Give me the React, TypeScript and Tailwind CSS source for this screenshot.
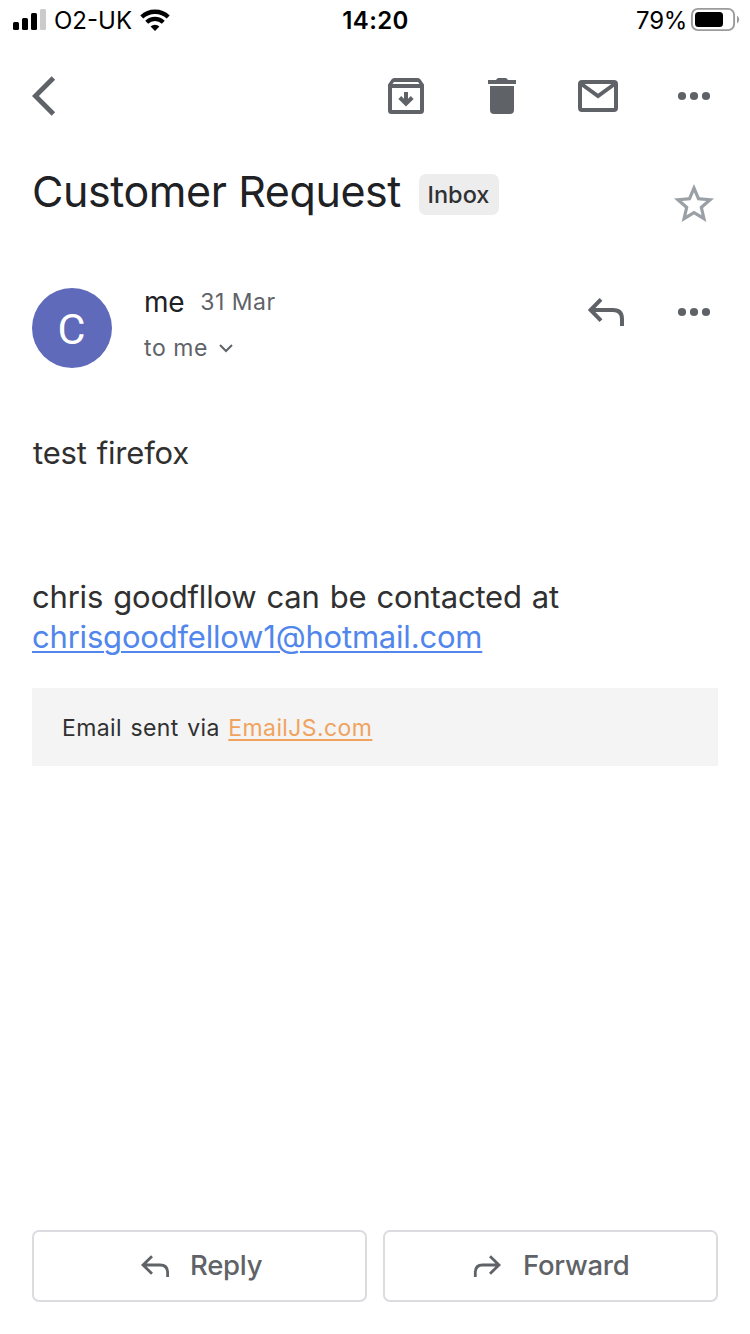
import type { ReactNode } from "react";

function Icon({ w = 48, h = 48, className = "", children }: { w?: number; h?: number; className?: string; children: ReactNode }) {
  return (
    <svg width={w} height={h} viewBox={`0 0 ${w} ${h}`} fill="none" stroke="currentColor" className={`block shrink-0 ${className}`}>
      {children}
    </svg>
  );
}

function Dots() {
  return (
    <Icon>
      <g fill="currentColor" stroke="none">
        <circle cx="12" cy="24" r="4.1" />
        <circle cx="24" cy="24" r="4.1" />
        <circle cx="36" cy="24" r="4.1" />
      </g>
    </Icon>
  );
}

function StatusBar() {
  return (
    <header className="grid h-10 grid-cols-3 items-center text-2xl/10 text-black">
      <div className="flex h-10 items-center pl-[13px]">
        <Icon w={33} h={40}>
          <g fill="currentColor" stroke="none">
            <rect x="0" y="22" width="6" height="8" rx="1.5" />
            <rect x="9" y="18" width="6" height="12" rx="1.5" />
            <rect x="18" y="13" width="6" height="17" rx="1.5" />
            <rect x="27" y="9" width="6" height="21" rx="1.5" className="text-[#cbcbcb]" />
          </g>
        </Icon>
        <span className="ml-2 w-[78px] pt-0.5 leading-[38px] whitespace-nowrap">O2-UK</span>
        <Icon w={30} h={40} className="ml-2">
          <path d="M1.8 17A19.2 19.2 0 0 1 28.2 17" strokeWidth="4.4" />
          <path d="M6.7 22.2A12 12 0 0 1 23.3 22.2" strokeWidth="4.2" />
          <path d="M15 31L10.6 26.6A6.4 6.4 0 0 1 19.4 26.6Z" fill="currentColor" stroke="none" />
        </Icon>
      </div>
      <div className="pt-0.5 pl-px text-center leading-[38px] font-semibold tracking-[0.4px]">14:20</div>
      <div className="flex h-10 items-center justify-end pr-[10px]">
        <span className="mr-[3px] pt-0.5 leading-[38px] tracking-[-0.3px]">79%</span>
        <Icon w={50} h={40}>
          <rect x="1.9" y="8.9" width="42.2" height="21.2" rx="6" className="text-[#9b9b9b]" strokeWidth="1.9" />
          <rect x="5" y="12" width="28" height="15" rx="3.5" fill="currentColor" stroke="none" />
          <path d="M47 15.5Q49.2 17 49.2 19.5T47 23.5Z" fill="#9b9b9b" stroke="none" />
        </Icon>
      </div>
    </header>
  );
}

function Toolbar() {
  return (
    <nav className="flex h-28 items-center pr-8 pl-8 text-[#5f6368]">
      <Icon w={24}>
        <path d="M21.4 6L3.4 24L21.4 42" strokeWidth="4.9" />
      </Icon>
      <div className="ml-auto flex gap-12">
        <Icon>
          <rect x="8" y="14" width="32" height="26" rx="1.5" strokeWidth="4" />
          <path d="M6 16V12.5L9.5 7.5Q10.5 6 12 6H36Q37.5 6 38.5 7.5L42 12.5V16ZM12 10L10.5 12H37.5L36 10Z" fill="currentColor" fillRule="evenodd" stroke="none" />
          <path d="M24 20V31M17.8 25.5L24 31.7L30.2 25.5" strokeWidth="4" />
        </Icon>
        <Icon>
          <path d="M10 8H18Q19 6 20.5 6H27.5Q29 6 30 8H38V12H10ZM12 14H36V38Q36 42 32 42H16Q12 42 12 38Z" fill="currentColor" stroke="none" />
        </Icon>
        <Icon>
          <rect x="6" y="10" width="36" height="28" rx="2" strokeWidth="4" />
          <path d="M6 11L24 24L42 11" strokeWidth="4" />
        </Icon>
        <Dots />
      </div>
    </nav>
  );
}

function Subject() {
  return (
    <section className="flex h-[104px] items-start pr-8 pl-8">
      <h1 className="mt-[15px] w-[371px] text-[43px]/[48px] font-normal tracking-[-0.42px] whitespace-nowrap text-[#202124]">Customer Request</h1>
      <span className="mt-[22px] ml-4 flex h-[41px] w-20 items-center justify-center rounded-[7px] bg-[#ededed] pr-px text-[23.5px]/[40px] font-medium text-[#303134]">Inbox</span>
      <svg viewBox="0 0 24 24" width="48" height="48" className="mt-7 ml-auto block fill-[#9aa0a6]">
        <path d="M22 9.24l-7.19-.62L12 2 9.19 8.63 2 9.24l5.46 4.73L5.82 21 12 17.27 18.18 21l-1.63-7.03L22 9.24zM12 15.4l-3.76 2.27 1-4.28-3.32-2.88 4.38-.38L12 6.1l1.71 4.04 4.38.38-3.32 2.88 1 4.28L12 15.4z" />
      </svg>
    </section>
  );
}

function Sender() {
  return (
    <section className="flex h-[120px] items-start pt-8 pr-8 pl-8 text-[#5f6368]">
      <div className="flex size-20 items-center justify-center rounded-full bg-[#5f6aba] pr-px font-['Roboto',sans-serif] text-[43px]/[80px] text-white">
        <span className="translate-y-px">C</span>
      </div>
      <div className="ml-8">
        <div className="flex h-7 items-baseline">
          <span className="text-[28px]/[28px] tracking-[-0.3px] text-[#202124]">me</span>
          <span className="ml-4 -translate-y-0.5 text-[23px]/[28px] tracking-[0.5px]">31 Mar</span>
        </div>
        <div className="mt-4 flex h-8 items-center">
          <span className="text-[23px]/[32px] tracking-[0.6px]">to me</span>
          <Icon w={16} h={12} className="ml-[10px]">
            <path d="M2 3L8 9L14 3" strokeWidth="2" />
          </Icon>
        </div>
      </div>
      <div className="ml-auto flex gap-10">
        <Icon>
          <path d="M19 11.4L8.6 22L19 32.6M8.6 22H31Q40 22 40 31V38" strokeWidth="4" />
        </Icon>
        <Dots />
      </div>
    </section>
  );
}

function Message() {
  return (
    <main className="px-8 pt-[57px] text-[31px]/[40px] tracking-[-0.2px] text-[#303030] [word-spacing:1.6px]">
      <p className="pl-px">test firefox</p>
      <p className="mt-[104px]">
        chris goodfllow can be contacted at
        <br />
        <a className="text-[#5186ec] underline decoration-2 underline-offset-[3px]">chrisgoodfellow1@hotmail.com</a>
      </p>
      <div className="mt-[31px] flex h-[78px] items-center bg-[#f4f4f4] pt-0.5 pl-[30px] text-[23px]/[40px] tracking-[0.4px] whitespace-pre">
        <span>Email sent via </span>
        <a className="text-[#f0a35e] underline decoration-[1.5px] underline-offset-[3px]">EmailJS.com</a>
      </div>
    </main>
  );
}

function Actions() {
  return (
    <footer className="mt-auto mb-8 grid grid-cols-2 gap-4 px-8 text-[27.5px]/[36px] font-medium tracking-[-0.25px] text-[#5f6368]">
      <button className="flex h-[72px] items-center rounded-[7px] border-2 border-[#dadce0] pl-[106px]">
        <Icon w={30} h={24}>
          <path d="M12 2.3L3 11L12 19.7M3 11H20Q27.6 11 27.6 18.5V23" strokeWidth="2.8" />
        </Icon>
        <span className="ml-5 -translate-y-px">Reply</span>
      </button>
      <button className="flex h-[72px] items-center rounded-[7px] border-2 border-[#dadce0] pl-[87px]">
        <Icon w={30} h={24}>
          <path d="M18 2.3L27 11L18 19.7M27 11H10.5Q3.3 11 3.3 18.5V23" strokeWidth="2.8" />
        </Icon>
        <span className="ml-[21px] -translate-y-px">Forward</span>
      </button>
    </footer>
  );
}

export default function App() {
  return (
    <div className="flex h-[1334px] w-[750px] flex-col overflow-hidden bg-white font-['Inter','Liberation_Sans',sans-serif]">
      <StatusBar />
      <Toolbar />
      <Subject />
      <Sender />
      <Message />
      <Actions />
    </div>
  );
}
